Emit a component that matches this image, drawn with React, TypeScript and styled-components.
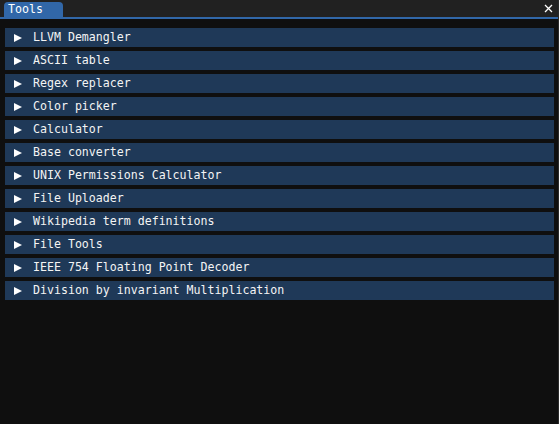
import React from "react";
import styled, { createGlobalStyle } from "styled-components";

const tools = [
  "LLVM Demangler",
  "ASCII table",
  "Regex replacer",
  "Color picker",
  "Calculator",
  "Base converter",
  "UNIX Permissions Calculator",
  "File Uploader",
  "Wikipedia term definitions",
  "File Tools",
  "IEEE 754 Floating Point Decoder",
  "Division by invariant Multiplication",
];

const GlobalStyle = createGlobalStyle`
  html, body {
    margin: 0;
    padding: 0;
    background: #0f0f0f;
  }
  body {
    font-family: "DejaVu Sans Mono", "Liberation Mono", monospace;
    font-size: 11.6px;
    color: #f4f4f4;
  }
`;

function App() {
  return (
    <>
      <GlobalStyle />
      <Window>
        <TabBar>
          <Tab>Tools</Tab>
          <Close>
            <svg width="9" height="9" viewBox="0 0 9 9">
              <path d="M1 1 L8 8 M8 1 L1 8" stroke="#ffffff" strokeWidth="1.3" />
            </svg>
          </Close>
        </TabBar>
        <TabLine />
        <Content>
          {tools.map((name) => (
            <Header key={name}>
              <Arrow />
              <Label>{name}</Label>
            </Header>
          ))}
        </Content>
      </Window>
    </>
  );
}

const Window = styled.div`
  width: 559px;
  height: 424px;
  background: #0f0f0f;
  display: flex;
  flex-direction: column;
  box-sizing: border-box;
  border-right: 1px solid #2a2a2a;
`;

const TabBar = styled.div`
  height: 17px;
  background: #212121;
  display: flex;
  align-items: flex-end;
  padding-left: 4px;
  padding-right: 5px;
`;

const Tab = styled.div`
  width: 59px;
  height: 15px;
  box-sizing: border-box;
  background: #3167a8;
  border-radius: 4px 4px 0 0;
  padding-left: 4px;
  line-height: 15px;
  color: #ffffff;
`;

const Close = styled.div`
  margin-left: auto;
  align-self: center;
  display: flex;
  align-items: center;
  justify-content: center;
  width: 9px;
  height: 9px;
`;

const TabLine = styled.div`
  height: 2px;
  background: #3167a8;
`;

const Content = styled.div`
  display: flex;
  flex-direction: column;
  gap: 4px;
  padding: 9px 4px 0 5px;
`;

const Header = styled.div`
  height: 19px;
  background: #1f3958;
  display: flex;
  align-items: center;
  padding-left: 9px;
`;

const Arrow = styled.div`
  width: 0;
  height: 0;
  border-top: 4.5px solid transparent;
  border-bottom: 4.5px solid transparent;
  border-left: 8px solid #ffffff;
  margin-right: 11px;
`;

const Label = styled.span`
  white-space: pre;
  line-height: 19px;
`;

export default App;
